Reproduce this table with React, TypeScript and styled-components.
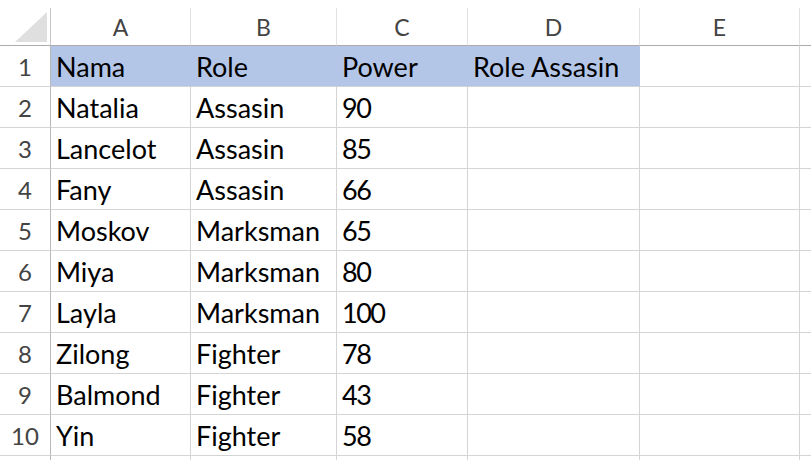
import React from "react";
import styled, { createGlobalStyle } from "styled-components";

const Global = createGlobalStyle`
  html, body { margin: 0; padding: 0; background: #fff; }
  body { font-family: Lato, "Liberation Sans", sans-serif; overflow: hidden; }
`;

const Page = styled.div`
  padding-top: 8px;
  width: 811px;
  height: 460px;
  box-sizing: border-box;
  overflow: hidden;
`;

const Grid = styled.div`
  display: grid;
  grid-template-columns: 51px 140px 146px 131px 172px 160px 40px;
  grid-template-rows: 38px repeat(11, 41px);
`;

const Corner = styled.div`
  position: relative;
  box-sizing: border-box;
  border-right: 1px solid #c8c8c8;
  border-bottom: 1px solid #ababab;
  background: #fff;
`;

const CornerTriangle = styled.div`
  position: absolute;
  right: 3px;
  bottom: 3px;
  width: 0;
  height: 0;
  border-left: 32px solid transparent;
  border-bottom: 30px solid #dfdfdf;
`;

const ColHead = styled.div`
  box-sizing: border-box;
  display: flex;
  align-items: center;
  justify-content: center;
  padding-top: 1px;
  font-size: 23px;
  color: #444;
  border-right: 1px solid #e2e2e2;
  border-bottom: 1px solid #ababab;
`;

const RowHead = styled.div`
  box-sizing: border-box;
  display: flex;
  align-items: center;
  justify-content: center;
  padding-top: 1px;
  font-size: 24px;
  color: #444;
  border-right: 1px solid #b8b8b8;
  border-bottom: 1px solid #d4d4d4;
`;

const Cell = styled.div<{ $fill?: boolean; $num?: boolean }>`
  box-sizing: border-box;
  display: flex;
  align-items: center;
  padding: 1px 0 0 5px;
  font-size: 27px;
  letter-spacing: ${(p) => (p.$num ? "-1.5px" : "0")};
  color: #000;
  white-space: nowrap;
  overflow: hidden;
  background: ${(p) => (p.$fill ? "#b4c6e7" : "#fff")};
  border-right: 1px solid ${(p) => (p.$fill ? "#b4c6e7" : "#d4d4d4")};
  border-bottom: 1px solid #d4d4d4;
`;

const cols = ["A", "B", "C", "D", "E", ""];

const rows: string[][] = [
  ["Nama", "Role", "Power", "Role Assasin"],
  ["Natalia", "Assasin", "90", ""],
  ["Lancelot", "Assasin", "85", ""],
  ["Fany", "Assasin", "66", ""],
  ["Moskov", "Marksman", "65", ""],
  ["Miya", "Marksman", "80", ""],
  ["Layla", "Marksman", "100", ""],
  ["Zilong", "Fighter", "78", ""],
  ["Balmond", "Fighter", "43", ""],
  ["Yin", "Fighter", "58", ""],
  ["", "", "", ""],
];

export default function App() {
  return (
    <Page>
      <Global />
      <Grid>
        <Corner>
          <CornerTriangle />
        </Corner>
        {cols.map((c, i) => (
          <ColHead key={i}>{c}</ColHead>
        ))}
        {rows.map((r, ri) => (
          <React.Fragment key={ri}>
            <RowHead>{ri < 10 ? ri + 1 : ""}</RowHead>
            {r.map((v, ci) => (
              <Cell key={ci} $fill={ri === 0} $num={/^\d+$/.test(v)}>
                {v}
              </Cell>
            ))}
            <Cell />
            <Cell />
          </React.Fragment>
        ))}
      </Grid>
    </Page>
  );
}
